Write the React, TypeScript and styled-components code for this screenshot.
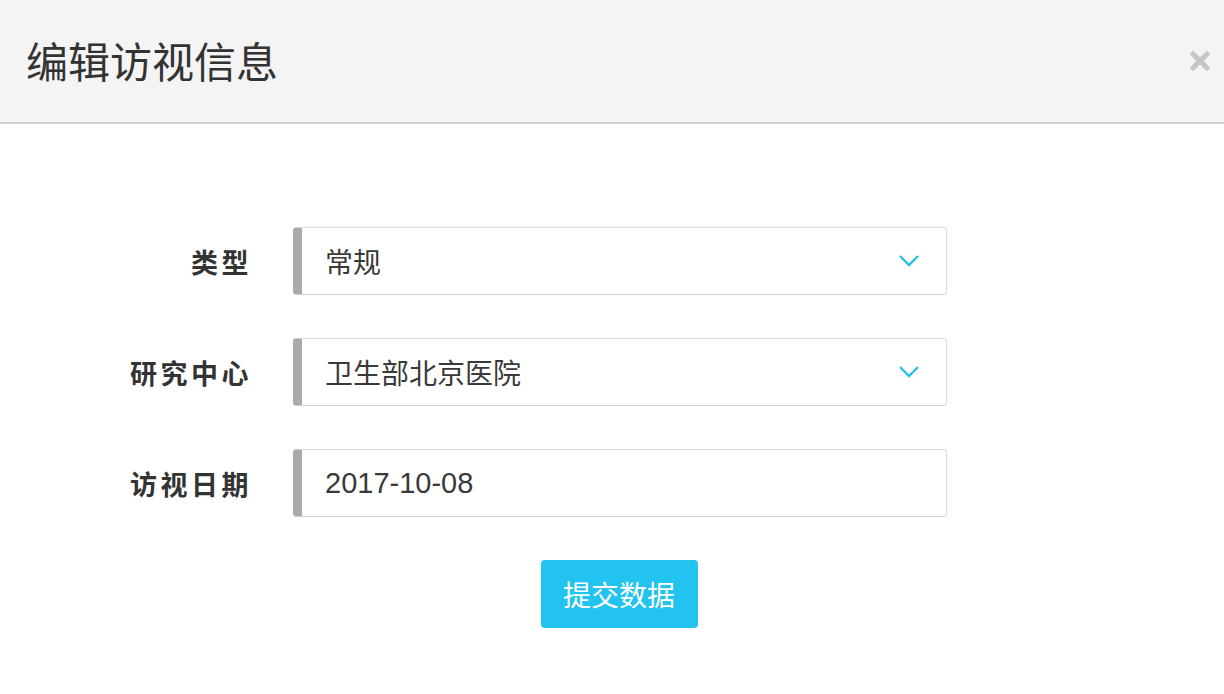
import React from "react";
import styled, { createGlobalStyle } from "styled-components";

const GlobalStyle = createGlobalStyle`
  html, body {
    margin: 0;
    padding: 0;
    background: #fff;
    font-family: "Liberation Sans", "Noto Sans CJK SC", sans-serif;
    color: #333;
  }
`;

const Modal = styled.div`
  width: 1224px;
  height: 694px;
  background: #fff;
  overflow: hidden;
`;

const Header = styled.div`
  height: 122px;
  background: #f4f4f4;
  border-bottom: 2px solid #cfcfcf;
  display: flex;
  align-items: center;
  justify-content: space-between;
  padding: 0 11px 0 26px;
`;

const Title = styled.h1`
  margin: 0;
  font-size: 42px;
  font-weight: 400;
  color: #333;
  font-family: "Noto Sans CJK SC", sans-serif;
  padding-bottom: 4px;
`;

const Close = styled.button`
  border: none;
  background: none;
  padding: 0;
  width: 26px;
  height: 26px;
  cursor: pointer;
  display: flex;
  align-items: center;
  justify-content: center;
`;

const Form = styled.form`
  display: flex;
  flex-direction: column;
  gap: 43px;
  padding-top: 103px;
`;

const Row = styled.div`
  display: flex;
  align-items: center;
`;

const Label = styled.label`
  width: 252px;
  text-align: right;
  font-size: 27px;
  font-weight: 700;
  letter-spacing: 3.5px;
  color: #333;
  font-family: "Noto Sans CJK SC", sans-serif;
  margin-right: 41px;
`;

const Field = styled.div`
  width: 654px;
  height: 68px;
  box-sizing: border-box;
  border: 1px solid #dcdcdc;
  border-bottom-color: #d0d0d0;
  border-left: 9px solid #aaaaaa;
  border-radius: 4px;
  display: flex;
  align-items: center;
  padding: 0 26px 0 23px;
  color: #3a3a3a;
`;

const Value = styled.span<{ $cjk?: boolean }>`
  flex: 1;
  font-size: ${(p) => (p.$cjk ? "28px" : "29px")};
  font-family: ${(p) =>
    p.$cjk ? `"Noto Sans CJK SC", sans-serif` : `"Liberation Sans", "Noto Sans CJK SC", sans-serif`};
`;

const Actions = styled.div`
  display: flex;
  justify-content: center;
  padding-left: 14px;
`;

const Submit = styled.button`
  width: 157px;
  height: 68px;
  border: none;
  border-radius: 4px;
  background: #22c3ee;
  color: #fff;
  font-size: 28px;
  font-family: "Noto Sans CJK SC", sans-serif;
  cursor: pointer;
`;

const Chevron = () => (
  <svg width="22" height="14" viewBox="0 0 22 14">
    <path d="M2 2 L11 11 L20 2" fill="none" stroke="#29c0e8" strokeWidth="2.4" />
  </svg>
);

const rows = [
  { label: "类型", value: "常规", select: true },
  { label: "研究中心", value: "卫生部北京医院", select: true },
  { label: "访视日期", value: "2017-10-08", select: false },
];

export default function App() {
  return (
    <Modal>
      <GlobalStyle />
      <Header>
        <Title>编辑访视信息</Title>
        <Close aria-label="close">
          <svg width="24" height="24" viewBox="0 0 24 24">
            <path d="M3.5 3.5 L20.5 20.5 M20.5 3.5 L3.5 20.5" stroke="#c6c6c6" strokeWidth="5" />
          </svg>
        </Close>
      </Header>
      <Form>
        {rows.map((r) => (
          <Row key={r.label}>
            <Label>{r.label}</Label>
            <Field>
              <Value $cjk={r.select}>{r.value}</Value>
              {r.select && <Chevron />}
            </Field>
          </Row>
        ))}
        <Actions>
          <Submit type="button">提交数据</Submit>
        </Actions>
      </Form>
    </Modal>
  );
}
